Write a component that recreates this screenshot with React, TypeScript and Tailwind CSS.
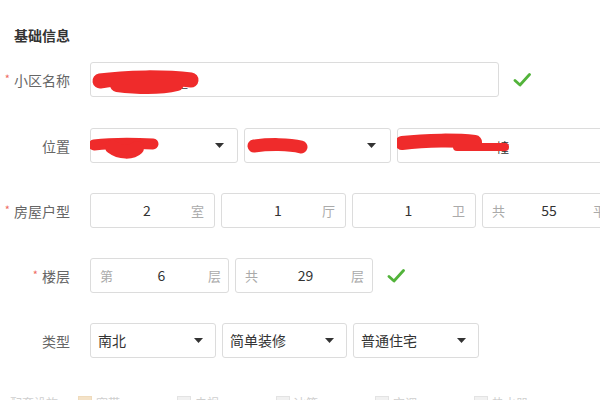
import React from "react";

const font = { fontFamily: '"Noto Sans CJK SC", "Noto Sans", sans-serif' };

function Check() {
  return (
    <svg width="18" height="16" viewBox="0 0 18 16" className="ml-[14px] shrink-0">
      <path d="M2 8.5 L7 13 L16.5 2.5" fill="none" stroke="#52b33a" strokeWidth="2.8" strokeLinecap="round" strokeLinejoin="round" />
    </svg>
  );
}

function Arrow() {
  return (
    <svg width="9" height="5" viewBox="0 0 9 5" className="shrink-0">
      <path d="M0 0 H9 L4.5 5 Z" fill="#333" />
    </svg>
  );
}

function Label({ text, req }: { text: string; req?: boolean }) {
  return (
    <div className="w-[70px] shrink-0 mr-[20px] text-right text-[14px] text-[#666] leading-none">
      {req && <span className="text-[#ef6a62] mr-[4px] text-[11px] relative -top-[3px]">*</span>}
      {text}
    </div>
  );
}

type Stroke = { d: string; w: number };

function Scribble({ strokes, className }: { strokes: Stroke[]; className: string }) {
  return (
    <svg className={"absolute pointer-events-none " + className} width="130" height="40" viewBox="0 0 130 40">
      {strokes.map((s, i) => (
        <path key={i} d={s.d} fill="none" stroke="#ef2b2b" strokeWidth={s.w} strokeLinecap="round" strokeLinejoin="round" />
      ))}
    </svg>
  );
}

export default function App() {
  const box = "h-[35px] border border-[#dcdcdc] rounded-[3px] bg-white flex items-center shrink-0 relative";
  return (
    <div className="w-[600px] h-[400px] bg-white overflow-hidden" style={font}>
      <div className="pt-[25px] pl-[14px] text-[14px] font-bold text-[#333] leading-[20px]">基础信息</div>

      {/* row 1 */}
      <div className="flex items-center mt-[17px]">
        <Label text="小区名称" req />
        <div className={box + " w-[409px]"}>
          <span className="absolute left-[86px] top-[12px] text-[11px] text-[#333]">区</span>
          <Scribble
            className="left-0 top-0"
            strokes={[
              { d: "M9 18 C 35 14, 75 14, 100 17", w: 15 },
              { d: "M26 22 C 50 25, 70 25, 86 21", w: 14 },
            ]}
          />
        </div>
        <Check />
      </div>

      {/* row 2 */}
      <div className="flex items-center mt-[31px]">
        <Label text="位置" />
        <div className={box + " w-[148px] justify-end pr-[13px]"}>
          <Scribble
            className="-left-[1px] -top-[1px]"
            strokes={[
              { d: "M4 17 C 20 15, 45 15, 63 16", w: 11 },
              { d: "M22 19 C 30 25, 42 25, 47 20", w: 14 },
            ]}
          />
          <Arrow />
        </div>
        <div className={box + " w-[147px] ml-[6px] justify-end pr-[14px]"}>
          <Scribble
            className="-left-[1px] -top-[1px]"
            strokes={[{ d: "M10 18 C 25 16, 45 16, 57 19", w: 13 }]}
          />
          <Arrow />
        </div>
        <div className={box + " w-[220px] ml-[6px] border-[#a8a8a8]"}>
          <span className="absolute left-[98px] top-[8px] text-[13px] text-[#333]">幢</span>
          <Scribble
            className="-left-[1px] -top-[1px]"
            strokes={[
              { d: "M5 15 C 30 12, 60 12, 78 14", w: 14 },
              { d: "M60 19 C 80 19, 95 19, 108 19", w: 8 },
            ]}
          />
        </div>
      </div>

      {/* row 3 */}
      <div className="flex items-center mt-[30px] text-[13px]">
        <Label text="房屋户型" req />
        <div className={box + " w-[125px] pl-[12px] pr-[10px]"}>
          <span className="flex-1 text-center text-[#333] text-[14px]">2</span>
          <span className="text-[#aaa]">室</span>
        </div>
        <div className={box + " w-[125px] ml-[6px] pl-[12px] pr-[10px]"}>
          <span className="flex-1 text-center text-[#333] text-[14px]">1</span>
          <span className="text-[#aaa]">厅</span>
        </div>
        <div className={box + " w-[124px] ml-[6px] pl-[12px] pr-[10px]"}>
          <span className="flex-1 text-center text-[#333] text-[14px]">1</span>
          <span className="text-[#aaa]">卫</span>
        </div>
        <div className={box + " w-[135px] ml-[6px] pl-[9px] pr-[10px]"}>
          <span className="text-[#aaa]">共</span>
          <span className="flex-1 text-center text-[#333] text-[14px]">55</span>
          <span className="text-[#aaa]">平</span>
        </div>
      </div>

      {/* row 4 */}
      <div className="flex items-center mt-[30px] text-[13px]">
        <Label text="楼层" req />
        <div className={box + " w-[139px] pl-[9px] pr-[7px]"}>
          <span className="text-[#aaa]">第</span>
          <span className="flex-1 text-center text-[#333] text-[14px] pl-[2px]">6</span>
          <span className="text-[#aaa]">层</span>
        </div>
        <div className={box + " w-[138px] ml-[6px] pl-[9px] pr-[8px]"}>
          <span className="text-[#aaa]">共</span>
          <span className="flex-1 text-center text-[#333] text-[14px] pl-[2px]">29</span>
          <span className="text-[#aaa]">层</span>
        </div>
        <Check />
      </div>

      {/* row 5 */}
      <div className="flex items-center mt-[30px] text-[14px] text-[#333]">
        <Label text="类型" />
        <div className={box + " w-[126px] pl-[7px] pr-[12px] justify-between"}>
          <span>南北</span>
          <Arrow />
        </div>
        <div className={box + " w-[125px] ml-[6px] pl-[7px] pr-[12px] justify-between"}>
          <span>简单装修</span>
          <Arrow />
        </div>
        <div className={box + " w-[126px] ml-[6px] pl-[7px] pr-[12px] justify-between"}>
          <span>普通住宅</span>
          <Arrow />
        </div>
      </div>

      {/* row 6 (mostly below the fold) */}
      <div className="flex items-start mt-[38px] text-[12px] text-[#888] opacity-40">
        <div className="w-[70px] mr-[8px] pl-[10px] leading-[14px]">配套设施</div>
        <div className="flex">
          {["宽带", "电视", "冰箱", "空调", "热水器"].map((t, i) => (
            <div key={t} className="w-[99px] flex items-start">
              <span className={"w-[14px] h-[14px] border " + (i === 0 ? "border-[#d9a65a] bg-[#e6b874]" : "border-[#bbb] bg-[#ddd]")} />
              <span className="ml-[4px] leading-[14px]">{t}</span>
            </div>
          ))}
        </div>
      </div>
    </div>
  );
}
